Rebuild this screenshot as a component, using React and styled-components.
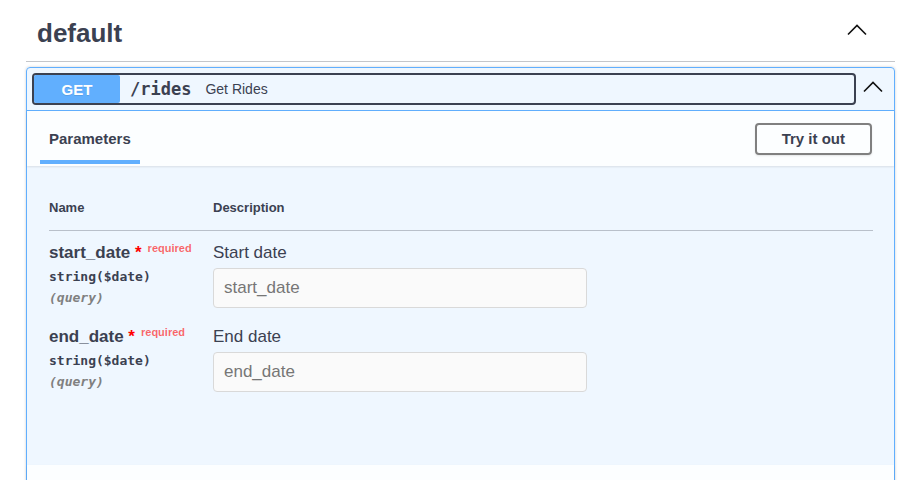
import React from 'react'
import styled, { createGlobalStyle } from 'styled-components'

const GlobalStyle = createGlobalStyle`
  html, body {
    margin: 0;
    padding: 0;
    background: #fff;
  }
  body {
    font-family: "Liberation Sans", Arial, Helvetica, sans-serif;
    color: #3b4151;
  }
  * {
    box-sizing: border-box;
  }
`

const parameters = [
  { name: 'start_date', type: 'string($date)', location: 'query', description: 'Start date' },
  { name: 'end_date', type: 'string($date)', location: 'query', description: 'End date' },
]

const Chevron = () => (
  <ChevronSvg viewBox="0 0 20 20">
    <polyline points="1,13.5 10,4.5 19,13.5" />
  </ChevronSvg>
)

const ParameterRow = ({ name, type, location, description }) => (
  <>
    <NameCell>
      <ParamName>
        {name}
        <Asterisk>&nbsp;*</Asterisk>
        <Required>required</Required>
      </ParamName>
      <ParamType>{type}</ParamType>
      <ParamIn>({location})</ParamIn>
    </NameCell>
    <DescCell>
      <DescLabel>{description}</DescLabel>
      <ParamInput type="text" placeholder={name} />
    </DescCell>
  </>
)

const App = () => (
  <>
    <GlobalStyle />
    <Page>
      <TagHeader>
        <TagTitle>default</TagTitle>
        <TagToggle aria-label="Collapse operation">
          <Chevron />
        </TagToggle>
      </TagHeader>

      <Opblock>
        <Summary>
          <SummaryControl>
            <Method>GET</Method>
            <Path>/rides</Path>
            <SummaryDescription>Get Rides</SummaryDescription>
          </SummaryControl>
          <ArrowButton aria-label="Collapse">
            <Chevron />
          </ArrowButton>
        </Summary>

        <SectionHeader>
          <Tab>Parameters</Tab>
          <TryButton>Try it out</TryButton>
        </SectionHeader>

        <TableContainer>
          <ParamGrid>
            <HeadCell>Name</HeadCell>
            <HeadCell>Description</HeadCell>
            {parameters.map(param => (
              <ParameterRow key={param.name} {...param} />
            ))}
          </ParamGrid>
        </TableContainer>

        {/* responses section starts here, below the visible area */}
        <ResponsesHeader />
      </Opblock>
    </Page>
  </>
)

export default App

const Page = styled.div`
  padding: 0 21px 0 26px;
`

const TagHeader = styled.div`
  display: flex;
  align-items: center;
  height: 62px;
  padding: 0 28px 0 11px;
  border-bottom: 1px solid rgba(59, 65, 81, 0.3);
`

const TagTitle = styled.h3`
  flex: 1;
  margin: 0;
  padding-top: 5px;
  font-size: 26px;
  line-height: 30px;
  font-weight: 700;
  color: #3b4151;
`

const TagToggle = styled.button`
  display: flex;
  width: 20px;
  height: 20px;
  padding: 0;
  border: none;
  background: none;
`

const ChevronSvg = styled.svg`
  width: 20px;
  height: 20px;
  fill: none;
  stroke: #111;
  stroke-width: 1.6;
`

const Opblock = styled.div`
  margin-top: 5px;
  border: 1px solid #61affe;
  border-radius: 4px;
  background: rgba(97, 175, 254, 0.1);
  box-shadow: 0 0 3px rgba(0, 0, 0, 0.19);
`

const Summary = styled.div`
  display: flex;
  align-items: center;
  padding: 5px;
  border-bottom: 1px solid #61affe;
`

const SummaryControl = styled.div`
  flex: 1;
  display: flex;
  align-items: center;
  height: 32px;
  border: 2px solid #3b4151;
  border-radius: 4px;
`

const Method = styled.span`
  display: flex;
  align-items: center;
  justify-content: center;
  width: 86px;
  height: 28px;
  border-radius: 2px;
  background: #61affe;
  color: #fff;
  font-size: 15px;
  font-weight: 700;
  text-shadow: 0 1px 0 rgba(0, 0, 0, 0.1);
`

const Path = styled.span`
  padding: 0 14px 0 10px;
  font-family: "DejaVu Sans Mono", "Liberation Mono", monospace;
  font-size: 17px;
  font-weight: 700;
  color: #3b4151;
`

const SummaryDescription = styled.span`
  font-size: 14px;
  color: #3b4151;
`

const ArrowButton = styled.button`
  display: flex;
  align-items: center;
  justify-content: center;
  width: 33px;
  height: 32px;
  padding: 0 0 3px;
  border: none;
  background: none;
`

const SectionHeader = styled.div`
  display: flex;
  align-items: center;
  height: 55px;
  padding: 0 22px 0 13px;
  background: rgba(255, 255, 255, 0.8);
  box-shadow: 0 1px 2px rgba(0, 0, 0, 0.1);
`

const Tab = styled.h4`
  align-self: flex-end;
  margin: 0 0 2px;
  padding: 19px 9px 12px;
  border-bottom: 4px solid #61affe;
  font-size: 15px;
  line-height: 18px;
  font-weight: 700;
  color: #3b4151;
`

const TryButton = styled.button`
  margin-left: auto;
  height: 32px;
  padding: 0 25px;
  border: 2px solid #808080;
  border-radius: 4px;
  background: transparent;
  box-shadow: 0 1px 2px rgba(0, 0, 0, 0.1);
  font-family: "Liberation Sans", Arial, sans-serif;
  font-size: 15px;
  font-weight: 700;
  color: #3b4151;
`

const TableContainer = styled.div`
  padding: 34px 21px 66px 22px;
`

const ParamGrid = styled.div`
  display: grid;
  grid-template-columns: 164px 1fr;
`

const HeadCell = styled.div`
  padding-bottom: 14px;
  border-bottom: 1px solid rgba(59, 65, 81, 0.3);
  font-size: 13px;
  line-height: 16px;
  font-weight: 700;
  color: #3b4151;
`

const NameCell = styled.div`
  padding: 12px 0 7px;
`

const DescCell = styled.div`
  padding: 12px 0 7px;
`

const ParamName = styled.div`
  font-size: 17px;
  line-height: 20px;
  font-weight: 700;
  color: #3b4151;
  white-space: nowrap;
`

const Asterisk = styled.span`
  color: red;
`

const Required = styled.span`
  position: relative;
  top: -6px;
  padding-left: 6px;
  font-size: 11px;
  font-weight: 700;
  color: rgba(255, 0, 0, 0.6);
`

const ParamType = styled.div`
  padding-top: 2px;
  font-family: "DejaVu Sans Mono", "Liberation Mono", monospace;
  font-size: 13px;
  line-height: 21px;
  font-weight: 700;
  color: #3b4151;
`

const ParamIn = styled.div`
  font-family: "DejaVu Sans Mono", "Liberation Mono", monospace;
  font-size: 13px;
  line-height: 21px;
  font-weight: 700;
  font-style: italic;
  color: #808080;
`

const DescLabel = styled.div`
  font-size: 17px;
  line-height: 20px;
  color: #3b4151;
`

const ParamInput = styled.input`
  display: block;
  width: 374px;
  height: 40px;
  margin-top: 5px;
  padding: 0 10px;
  border: 1px solid #d9d9d9;
  border-radius: 4px;
  background: #fafafa;
  font-family: "Liberation Sans", Arial, sans-serif;
  font-size: 17px;
  color: #3b4151;
  outline: none;

  &::placeholder {
    color: #767676;
  }
`

const ResponsesHeader = styled.div`
  height: 55px;
  background: rgba(255, 255, 255, 0.8);
  box-shadow: 0 1px 2px rgba(0, 0, 0, 0.1);
`
